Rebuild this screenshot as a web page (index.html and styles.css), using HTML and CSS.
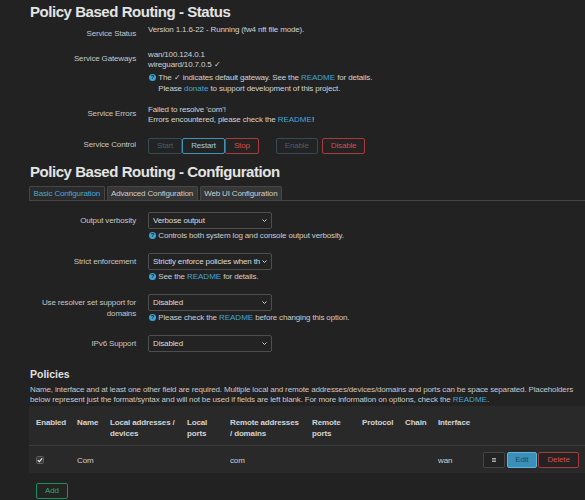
FILE: index.html
```html
<!DOCTYPE html>
<html lang="en">
<head>
	<meta charset="UTF-8">
	<title>Policy Based Routing</title>
	<link rel="stylesheet" href="styles.css">
</head>
<body>
	<div class="main">
		<h2>Policy Based Routing - Status</h2>
		<div class="row">
			<div class="label">Service Status</div>
			<div class="value">Version 1.1.6-22 - Running (fw4 nft file mode).</div>
		</div>
		<div class="row">
			<div class="label">Service Gateways</div>
			<div class="value">
				wan/100.124.0.1<br>
				wireguard/10.7.0.5 ✓
				<div class="help multi">
					<span class="help-icon">?</span>
					<div>The ✓ indicates default gateway. See the <a href="#">README</a> for details.<br>Please <a href="#">donate</a> to support development of this project.</div>
				</div>
			</div>
		</div>
		<div class="row">
			<div class="label">Service Errors</div>
			<div class="value">
				Failed to resolve 'com'!<br>
				Errors encountered, please check the <a href="#">README</a>!
			</div>
		</div>
		<div class="row">
			<div class="label">Service Control</div>
			<div class="value btns">
				<div class="btn-group">
					<span class="btn">Start</span>
					<span class="btn primary">Restart</span>
					<span class="btn danger">Stop</span>
				</div>
				<span class="btn enable">Enable</span>
				<span class="btn danger">Disable</span>
			</div>
		</div>

		<h2 class="config">Policy Based Routing - Configuration</h2>
		<div class="tabs">
			<span class="tab active">Basic Configuration</span>
			<span class="tab">Advanced Configuration</span>
			<span class="tab">Web UI Configuration</span>
		</div>
		<div class="form">
			<div class="frow">
				<div class="label">Output verbosity</div>
				<div class="field">
					<div class="select"><span>Verbose output</span><svg width="5" height="3" viewBox="0 0 5 3"><polyline points="0.5,0.5 2.5,2.5 4.5,0.5" fill="none" stroke="#cfcfcf" stroke-width="1"/></svg></div>
					<div class="help"><span class="help-icon">?</span>Controls both system log and console output verbosity.</div>
				</div>
			</div>
			<div class="frow">
				<div class="label">Strict enforcement</div>
				<div class="field">
					<div class="select"><span>Strictly enforce policies when the</span><svg width="5" height="3" viewBox="0 0 5 3"><polyline points="0.5,0.5 2.5,2.5 4.5,0.5" fill="none" stroke="#cfcfcf" stroke-width="1"/></svg></div>
					<div class="help"><span class="help-icon">?</span>See the&nbsp;<a href="#">README</a>&nbsp;for details.</div>
				</div>
			</div>
			<div class="frow">
				<div class="label">Use resolver set support for domains</div>
				<div class="field">
					<div class="select"><span>Disabled</span><svg width="5" height="3" viewBox="0 0 5 3"><polyline points="0.5,0.5 2.5,2.5 4.5,0.5" fill="none" stroke="#cfcfcf" stroke-width="1"/></svg></div>
					<div class="help"><span class="help-icon">?</span>Please check the&nbsp;<a href="#">README</a>&nbsp;before changing this option.</div>
				</div>
			</div>
			<div class="frow">
				<div class="label">IPv6 Support</div>
				<div class="field">
					<div class="select"><span>Disabled</span><svg width="5" height="3" viewBox="0 0 5 3"><polyline points="0.5,0.5 2.5,2.5 4.5,0.5" fill="none" stroke="#cfcfcf" stroke-width="1"/></svg></div>
				</div>
			</div>
		</div>

		<h3>Policies</h3>
		<p class="desc">Name, interface and at least one other field are required. Multiple local and remote addresses/devices/domains and ports can be space separated. Placeholders below represent just the format/syntax and will not be used if fields are left blank. For more information on options, check the <a href="#">README</a>.</p>
		<div class="tbl">
			<div class="thead">
				<div>Enabled</div>
				<div>Name</div>
				<div>Local addresses /<br>devices</div>
				<div>Local<br>ports</div>
				<div>Remote addresses<br>/ domains</div>
				<div>Remote<br>ports</div>
				<div>Protocol</div>
				<div>Chain</div>
				<div>Interface</div>
				<div></div>
			</div>
			<div class="trow">
				<div><svg class="check" width="8" height="8" viewBox="0 0 8 8"><rect x="0.5" y="0.5" width="7" height="7" rx="1" fill="#3a3a3a" stroke="#5c5c5c"/><path d="M1.8 4.2 L3.3 5.6 L6.2 2.4" fill="none" stroke="#f2f2f2" stroke-width="1.1"/></svg></div>
				<div>Com</div>
				<div></div>
				<div></div>
				<div>com</div>
				<div></div>
				<div></div>
				<div></div>
				<div>wan</div>
				<div class="actions">
					<span class="btn drag"><svg width="4" height="4" viewBox="0 0 4 4"><rect x="0" y="0" width="4" height="1" fill="#a8a8a8"/><rect x="0" y="1.5" width="4" height="1" fill="#a8a8a8"/><rect x="0" y="3" width="4" height="1" fill="#a8a8a8"/></svg></span>
					<span class="btn edit">Edit</span>
					<span class="btn danger">Delete</span>
				</div>
			</div>
		</div>
		<span class="btn add">Add</span>
	</div>
</body>
</html>
```

FILE: styles.css
```css
body {
	margin: 0;
	background: #222;
	color: #cdcdcd;
	font-family: "Liberation Sans", Arial, sans-serif;
	font-size: 8px;
	letter-spacing: -0.15px;
}
a {
	color: #45a5d3;
	text-decoration: none;
	letter-spacing: 0;
}
.main {
	padding-left: 29px;
}
h2 {
	margin: 0;
	padding: 3.5px 0 0 1px;
	font-size: 15px;
	line-height: 16px;
	letter-spacing: -0.45px;
	color: #e4e4e4;
}
h2.config {
	margin-top: 5px;
	padding-top: 0;
}
.row {
	display: flex;
	padding: 5.5px 0 5px;
}
.label {
	width: 107px;
	padding: 3.3px 12px 0 0;
	text-align: right;
	line-height: 11px;
	color: #c6c6c6;
}
.value {
	line-height: 10px;
	color: #d2d2d2;
}
.help {
	display: flex;
	align-items: center;
	line-height: 10px;
	margin-top: 1.5px;
	white-space: nowrap;
}
.help.multi {
	align-items: flex-start;
	line-height: 11px;
	margin-top: 2.5px;
}
.help-icon {
	display: inline-block;
	width: 7px;
	height: 7px;
	margin: 0 2.3px 0 1px;
	border-radius: 50%;
	background: #3da3d3;
	color: #222;
	font-size: 6px;
	font-weight: bold;
	line-height: 7px;
	text-align: center;
	letter-spacing: 0;
	flex-shrink: 0;
}
.help.multi .help-icon {
	margin-top: 2px;
}
/* buttons */
.btns {
	display: flex;
	padding-top: 2.7px;
}
.btn-group {
	display: flex;
	margin-right: 17px;
}
.btn {
	display: inline-block;
	box-sizing: border-box;
	height: 16px;
	padding: 0 8px;
	line-height: 14px;
	border: 1px solid #344a55;
	border-radius: 2px;
	background: #232323;
	color: #4b5f6a;
	white-space: nowrap;
}
.btn.primary {
	border-color: #3f93bb;
	color: #9fcde4;
}
.btn.danger {
	border-color: #a83c3c;
	color: #d54b4b;
}
.btn.enable {
	margin-right: 4px;
}
/* tabs */
.tabs {
	display: flex;
	gap: 2px;
	margin-top: 6.2px;
	border-bottom: 1px solid #444;
}
.tab {
	height: 14px;
	padding: 0 3.5px;
	line-height: 14px;
	border: 1px solid #474747;
	border-bottom: none;
	border-radius: 2px 2px 0 0;
	background: #363636;
	color: #cdcdcd;
	box-sizing: border-box;
}
.tab.active {
	background: #2a2a2a;
	color: #4aa7d4;
}
/* form */
.form {
	padding-top: 5px;
}
.frow {
	display: flex;
	padding: 6px 0 6.5px;
}
.frow .label {
	padding-top: 3px;
}
.field {
	display: flex;
	flex-direction: column;
}
.select {
	display: flex;
	align-items: center;
	box-sizing: border-box;
	width: 124px;
	height: 17px;
	padding: 0 4px;
	border: 1px solid #4e4e4e;
	border-radius: 2px;
	background: #232323;
	color: #dcdcdc;
}
.select span {
	flex: 1;
	overflow: hidden;
	white-space: nowrap;
	margin-right: 2px;
}
/* policies */
h3 {
	margin: 9px 0 0 1px;
	font-size: 10.5px;
	line-height: 13px;
	letter-spacing: 0;
	color: #e0e0e0;
}
.desc {
	margin: 4.8px 0 1px 1px;
	line-height: 10px;
	color: #c8c8c8;
}
.tbl {
	background: #292929;
}
.thead,
.trow {
	display: grid;
	grid-template-columns: 41px 33px 77px 43px 82px 50px 43px 33px 45px 1fr;
}
.thead {
	padding: 10.3px 0 6px;
	border-bottom: 1px solid #3a3a3a;
	font-weight: bold;
	line-height: 11px;
	color: #d4d4d4;
}
.thead div,
.trow div {
	padding-left: 7px;
	white-space: nowrap;
}
.trow {
	align-items: center;
	padding: 6px 0 5px;
	color: #d0d0d0;
}
.check {
	display: block;
}
.trow .actions {
	display: flex;
	justify-content: flex-end;
	padding-right: 6.3px;
}
.actions .btn {
	height: 16.7px;
	line-height: 14.7px;
}
.btn.drag {
	display: flex;
	align-items: center;
	justify-content: center;
	width: 21.6px;
	padding: 0;
	border-color: #454545;
	margin-right: 2px;
}
.btn.edit {
	width: 30.3px;
	padding: 0;
	text-align: center;
	background: #3c8fb7;
	border-color: #5cb3dc;
	color: #1f4b60;
	margin-right: 1.5px;
}
.btn.add {
	margin: 10px 0 0 7px;
	border-color: #1c8f62;
	color: #2cac6c;
}
```
